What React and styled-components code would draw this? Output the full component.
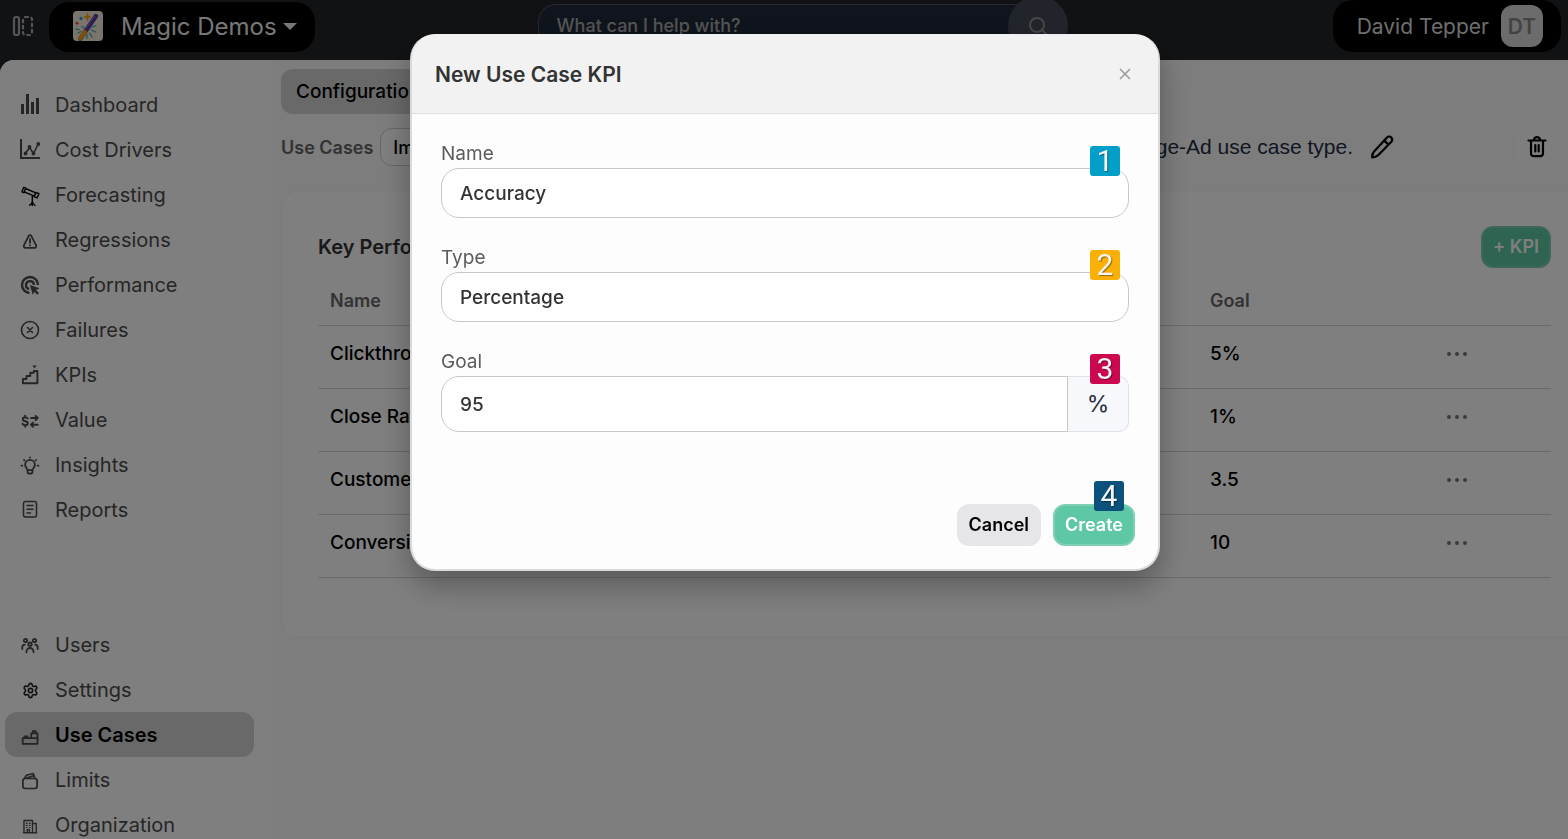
import styled, { createGlobalStyle } from "styled-components";
import { useState } from "react";
import { Settings } from "lucide-react";

const mainNav = [
  { label: "Dashboard", icon: <DashboardIcon /> },
  { label: "Cost Drivers", icon: <CostIcon /> },
  { label: "Forecasting", icon: <TelescopeIcon /> },
  { label: "Regressions", icon: <WarningIcon /> },
  { label: "Performance", icon: <TargetIcon /> },
  { label: "Failures", icon: <FailureIcon /> },
  { label: "KPIs", icon: <StairsIcon /> },
  { label: "Value", icon: <ValueIcon /> },
  { label: "Insights", icon: <BulbIcon /> },
  { label: "Reports", icon: <ReportIcon /> },
];

const adminNav = [
  { label: "Users", icon: <UsersIcon /> },
  { label: "Settings", icon: <Settings size={17} strokeWidth={2.3} color="#222" /> },
  { label: "Use Cases", icon: <BlocksIcon />, active: true },
  { label: "Limits", icon: <WalletIcon /> },
  { label: "Organization", icon: <BuildingIcon /> },
];

const kpis = [
  { name: "Clickthrough", goal: "5%" },
  { name: "Close Rate", goal: "1%" },
  { name: "Customers", goal: "3.5" },
  { name: "Conversion", goal: "10" },
];

function Svg({ size = 24, width = 1.6, children }) {
  return (
    <svg
      width={size}
      height={size}
      viewBox="0 0 24 24"
      fill="none"
      stroke="currentColor"
      strokeWidth={width}
      strokeLinecap="round"
      strokeLinejoin="round"
      aria-hidden="true"
    >
      {children}
    </svg>
  );
}

function DashboardIcon() {
  return (
    <Svg>
      <path d="M3 10h3v10H3zM8 0h3v20H8zM13 8h3v12h-3zM18 4h3v16h-3z" fill="currentColor" stroke="none" />
    </Svg>
  );
}

function CostIcon() {
  return (
    <Svg>
      <path d="M3 0v19h19" strokeWidth="2" strokeLinecap="butt" strokeLinejoin="miter" />
      <path d="M7.500 14.500l4-6 4 6L20 5.500" />
      <g fill="currentColor" stroke="none">
        <circle cx="7.500" cy="14.500" r="1.900" />
        <circle cx="11.500" cy="8" r="1.900" />
        <circle cx="15.500" cy="14.500" r="1.900" />
        <circle cx="20.300" cy="5" r="1.900" />
      </g>
    </Svg>
  );
}

function TelescopeIcon() {
  return (
    <Svg width={1.4}>
      <g stroke="#000">
        <path d="M5.800 3.300l2 .9-1.900 4.500-2-.9zM7.600 4.500l10.200 4.400-1.400 3.200L6.200 7.900M17.900 8.400l3 1.300-1.800 4.200-3-1.300z" />
        <path d="M14.300 12.500v9M14.300 17.500c-.3 1.800-1.300 2.800-2.600 3.800M14.300 17.500c.3 1.800 1.300 2.800 2.600 3.800" />
      </g>
    </Svg>
  );
}

function WarningIcon() {
  return (
    <Svg width={1.8}>
      <path d="M10.700 6.800L5.900 16.400a1.700 1.700 0 0 0 1.500 2.400h9.200a1.700 1.700 0 0 0 1.500-2.400l-4.800-9.600a1.500 1.500 0 0 0-2.600 0z" />
      <path d="M12 10v3.800M12 16.100v.3" />
    </Svg>
  );
}

function TargetIcon() {
  return (
    <Svg width={2.4}>
      <path d="M20 11A8 8 0 1 0 11.500 19M16 10.800a4 4 0 1 0-4.800 4.200" strokeLinecap="butt" />
      <path d="M12 11l9.500 3.200-3.500 1.800 3 3-1.700 1.700-3-3-1.500 3.300z" fill="currentColor" stroke="none" />
    </Svg>
  );
}

function FailureIcon() {
  return (
    <Svg width={1.6}>
      <circle cx="12" cy="11" r="8.500" />
      <path d="M9.500 8.500l5 5M14.500 8.500l-5 5" />
    </Svg>
  );
}

function StairsIcon() {
  return (
    <Svg width={1.9}>
      <path d="M4.900 19.200v-4.200h3.600v-3h3.800V8.800h3.500V7h3.600v12.200z" />
      <path d="M14.300 1.500h4.400l-2.200 2.800z" fill="currentColor" stroke="none" />
    </Svg>
  );
}

function ValueIcon() {
  return (
    <Svg width={1.9}>
      <path d="M9.600 9.500C9 8.600 8.200 8.300 7.200 8.300c-1.400 0-2.400.6-2.400 1.900 0 2.800 5 1.300 5 4 0 1.300-1 2-2.500 2-1.200 0-2.200-.4-2.800-1.400M7.200 6.800v1.500M7.200 16.200v1.500" />
      <path d="M13 9h6.600M17.600 6.900L19.700 9l-2.100 2.100M19.700 15.700H13M15 13.600l-2.100 2.100 2.100 2.100" />
    </Svg>
  );
}

function BulbIcon() {
  return (
    <Svg width={1.8}>
      <path d="M9.500 16c0-1.500-2.400-2.400-2.400-5.200a4.900 4.900 0 0 1 9.800 0c0 2.800-2.400 3.700-2.400 5.200v1.700c0 1.200-.8 2-2.500 2s-2.500-.8-2.500-2zM9.700 16.200h4.600" />
      <path d="M12 3.300v.3M3.500 11.700h.8M19.700 11.700h.8M6 5.900l.4.400M18 5.900l-.4.400" />
    </Svg>
  );
}

function ReportIcon() {
  return (
    <Svg width={1.5}>
      <rect x="5.500" y="2.500" width="13" height="15.500" rx="2" />
      <path d="M9 6.500h6M9 10.200h6M9 14h3.500" />
    </Svg>
  );
}

function UsersIcon() {
  return (
    <Svg width={1.8}>
      <circle cx="7.500" cy="6.500" r="1.700" />
      <circle cx="16.500" cy="6.500" r="1.700" />
      <circle cx="12" cy="10.200" r="1.700" />
      <path d="M8.500 18.300v-.8a3.500 3.500 0 0 1 7 0v.8M4.300 15v-1.800c0-1.500 1-2.500 2.500-2.600M19.700 15v-1.800c0-1.500-1-2.500-2.500-2.600" />
    </Svg>
  );
}

function BlocksIcon() {
  return (
    <Svg width={1.8}>
      <path d="M4.700 19.800v-5.600h8.500V9.300h6.300v10.500zM13.200 14.200h6.300M6.500 14v-1.700h3V14M14.800 9V7.200h3V9" />
    </Svg>
  );
}

function WalletIcon() {
  return (
    <Svg width={1.7}>
      <rect x="4.900" y="9.500" width="14.200" height="10" rx="2.400" />
      <path d="M6.600 9.200l1.800-3 6.800-1.700 1.600 4.500M9.500 8.800l5.800-2" />
    </Svg>
  );
}

function BuildingIcon() {
  return (
    <Svg width={1.4}>
      <path d="M6 18.500V6.500h8.500v12M14.500 9.500h3.700v9M5.500 18.700h13.200M9.200 18.500v-2.700h2.200v2.700" />
      <path d="M8.500 9.200h.6M11.600 9.200h.6M8.500 11.400h.6M11.600 11.400h.6M8.500 13.600h.6M11.600 13.600h.6" />
    </Svg>
  );
}

function PanelIcon() {
  return (
    <Svg size={24} width={2.2}>
      <rect x="3" y="3" width="5" height="18" rx="2" />
      <rect x="12" y="3" width="9" height="18" rx="2.500" strokeDasharray="2.500 3.600" />
    </Svg>
  );
}

function WandLogo() {
  return (
    <svg width="30" height="30" viewBox="0 0 30 30" aria-hidden="true">
      <rect width="30" height="30" rx="4" fill="#f3ead8" />
      <path d="M7.500 27.500L22.800 5.200" stroke="#5c3a9e" strokeWidth="4.600" strokeLinecap="round" />
      <path d="M21 5.500l-8 12" stroke="#8a63c8" strokeWidth="1.200" strokeLinecap="round" />
      <path d="M7.500 27L11.500 21.200" stroke="#f0a020" strokeWidth="4.600" strokeLinecap="round" />
      <path d="M14.500 1l1.200 3.800L19 6l-3.300 1.200L14.500 11l-1.200-3.800L10 6l3.300-1.200z" fill="#f2a516" />
      <path d="M8 5l.7 1.800 1.800.7-1.800.7L8 10l-.7-1.800-1.800-.7 1.800-.7z" fill="#2f7fd0" />
      <path d="M4 10l.7 1.600 1.600.7-1.600.7L4 14.600l-.7-1.600-1.600-.7 1.600-.7z" fill="#e0453a" />
      <path d="M3 18l3 .7M5 22l3-1.500M9 15.500l2 1.500M19 16l4-1.500M18.500 19l4 2M16.500 22l2.500 4M14 23.500v4" stroke="#2fa79c" strokeWidth="1.200" strokeLinecap="round" />
    </svg>
  );
}

function PencilIcon() {
  return (
    <Svg size={26} width={2.1}>
      <path d="M16.600 3.200a2.800 2.800 0 0 1 4 4L8.200 19.800c-1.300 1.200-3 1.800-5.200 1.700-.2-2.200.4-4 1.700-5.300zM14 5.900l3.900 3.900" />
    </Svg>
  );
}

function TrashIcon() {
  return (
    <Svg width={2.2}>
      <path d="M3.500 5.500h17M6 5.500v12.700a3 3 0 0 0 3 3h6a3 3 0 0 0 3-3V5.500M8.800 5.300a3.200 3.200 0 0 1 6.400 0M10.300 10v6.500M13.700 10v6.500" />
    </Svg>
  );
}

function App() {
  const [name, setName] = useState("Accuracy");
  const [type, setType] = useState("Percentage");
  const [goal, setGoal] = useState("95");

  return (
    <>
      <GlobalStyle />
      <Page>
        <TopBar>
          <PanelButton aria-label="Toggle sidebar">
            <PanelIcon />
          </PanelButton>
          <TeamButton>
            <WandLogo />
            <span>Magic Demos</span>
            <Caret />
          </TeamButton>
          <Search>
            <input aria-label="Search" placeholder="What can I help with?" />
            <SearchButton aria-label="Submit search">
              <Svg size={24} width={2}>
                <circle cx="11" cy="11" r="7" />
                <path d="M16 16l5 5" />
              </Svg>
            </SearchButton>
          </Search>
          <UserButton>
            <span>David Tepper</span>
            <Initials>DT</Initials>
          </UserButton>
        </TopBar>
        <Body>
          <Sidebar>
            <NavList>
              {mainNav.map((item) => (
                <NavItem key={item.label} href="#">
                  <IconBox>{item.icon}</IconBox>
                  {item.label}
                </NavItem>
              ))}
            </NavList>
            <NavList>
              {adminNav.map((item) => (
                <NavItem key={item.label} href="#" $active={item.active}>
                  <IconBox>{item.icon}</IconBox>
                  {item.label}
                </NavItem>
              ))}
            </NavList>
          </Sidebar>
          <Content>
            <Tab>Configuration</Tab>
            <Toolbar>
              <label htmlFor="usecase">Use Cases</label>
              <UseCaseSelect id="usecase" defaultValue="Image-Ad">
                <option>Image-Ad</option>
              </UseCaseSelect>
              <Description>Image-Ad use case type.</Description>
              <IconButton aria-label="Edit">
                <PencilIcon />
              </IconButton>
              <DeleteButton aria-label="Delete">
                <TrashIcon />
              </DeleteButton>
            </Toolbar>
            <Card>
              <CardHead>
                <h2>Key Performance</h2>
                <PrimaryButton>+ KPI</PrimaryButton>
              </CardHead>
              <Table>
                <thead>
                  <tr>
                    <th>Name</th>
                    <th>Goal</th>
                    <th aria-label="Actions" />
                  </tr>
                </thead>
                <tbody>
                  {kpis.map((kpi) => (
                    <tr key={kpi.name}>
                      <td>{kpi.name}</td>
                      <td>{kpi.goal}</td>
                      <td>
                        <MoreButton aria-label="More">
                          <svg width="24" height="6" viewBox="0 0 24 6" fill="currentColor">
                            <circle cx="4" cy="4" r="2" />
                            <circle cx="12" cy="4" r="2" />
                            <circle cx="20" cy="4" r="2" />
                          </svg>
                        </MoreButton>
                      </td>
                    </tr>
                  ))}
                </tbody>
              </Table>
            </Card>
          </Content>
        </Body>
      </Page>

      <Overlay>
        <Modal role="dialog" aria-labelledby="modal-title">
          <ModalHead>
            <h1 id="modal-title">New Use Case KPI</h1>
            <CloseButton aria-label="Close">
              <svg width="12" height="12" viewBox="0 0 12 12" stroke="currentColor" strokeWidth="1.500">
                <path d="M1 1l10 10M11 1L1 11" />
              </svg>
            </CloseButton>
          </ModalHead>
          <Form onSubmit={(e) => e.preventDefault()}>
            <Field>
              <label htmlFor="name">Name</label>
              <Input id="name" value={name} onChange={(e) => setName(e.target.value)} />
              <Step $color="#029fc9">1</Step>
            </Field>
            <Field>
              <label htmlFor="type">Type</label>
              <Input as="select" id="type" value={type} onChange={(e) => setType(e.target.value)}>
                <option>Percentage</option>
                <option>Number</option>
              </Input>
              <Step $color="#fab005">2</Step>
            </Field>
            <Field>
              <label htmlFor="goal">Goal</label>
              <InputGroup>
                <Input id="goal" value={goal} onChange={(e) => setGoal(e.target.value)} />
                <Addon>%</Addon>
              </InputGroup>
              <Step $color="#cb0850">3</Step>
            </Field>
            <Actions>
              <CancelButton type="button">Cancel</CancelButton>
              <PrimaryButton type="submit">Create</PrimaryButton>
              <Step $color="#0c507c">4</Step>
            </Actions>
          </Form>
        </Modal>
      </Overlay>
    </>
  );
}

const GlobalStyle = createGlobalStyle`
  * {
    box-sizing: border-box;
  }
  body {
    margin: 0;
    overflow: hidden;
    font-family: Inter, "Liberation Sans", sans-serif;
    font-size: 19px;
    color: #000;
    background: #222528;
  }
  h1, h2, p {
    margin: 0;
  }
  button, input, select {
    font: inherit;
    color: inherit;
  }
  button {
    border: 0;
    padding: 0;
    background: none;
    cursor: pointer;
  }
`;

const Page = styled.div`
  display: flex;
  flex-direction: column;
  height: 100vh;
`;

const TopBar = styled.header`
  display: flex;
  align-items: flex-start;
  flex: none;
  height: 60px;
  padding-right: 7px;
  color: #fff;
`;

const PanelButton = styled.button`
  display: flex;
  margin: 14px 14px 0 11px;
  color: #aaa;
`;

const TeamButton = styled.button`
  display: flex;
  align-items: center;
  height: 50px;
  margin-top: 2px;
  padding: 0 18px 2px 24px;
  border-radius: 20px;
  background: #000;
  font-size: 24px;
  color: #eee;

  span {
    margin: 0 6px 0 18px;
  }
`;

const Caret = styled.i`
  border: 7px solid transparent;
  border-top-color: #eee;
  border-bottom: 0;
`;

const Search = styled.div`
  display: flex;
  flex: none;
  width: 34%;
  margin: -4px 0 0 223px;
  align-items: center;

  input {
    flex: 1;
    height: 44px;
    padding: 0 18px 2px;
    border: 1px solid #4a505a;
    border-right: 0;
    border-radius: 18px 0 0 18px;
    background: #202a3a;
    font-size: 18px;
    font-weight: 500;
  }
  input::placeholder {
    color: #aaa;
    opacity: 1;
  }
`;

const SearchButton = styled.button`
  display: grid;
  place-items: center;
  width: 60px;
  height: 60px;
  margin-left: -32px;
  border-radius: 50%;
  background: #444958;
  color: #8e8e8e;
`;

const UserButton = styled.button`
  display: flex;
  align-items: center;
  gap: 12px;
  height: 52px;
  margin-left: auto;
  padding: 0 18px 0 24px;
  border-radius: 20px;
  background: #000;
  font-size: 21px;
  color: #ddd;
`;

const Initials = styled.b`
  display: grid;
  place-items: center;
  width: 42px;
  height: 42px;
  border-radius: 12px;
  background: #d8d8d8;
  color: #888;
  font-weight: 600;
`;

const Body = styled.div`
  display: grid;
  grid-template-columns: 272px 1fr;
  flex: 1;
  min-height: 0;
  border-radius: 14px 0 0 0;
  background: #fafafa;
  overflow: hidden;
`;

const Sidebar = styled.nav`
  display: flex;
  flex-direction: column;
  gap: 90px;
  padding: 22px 18px 0 5px;
  background: #fff;
`;

const NavList = styled.div`
  display: flex;
  flex-direction: column;
`;

const NavItem = styled.a`
  display: flex;
  align-items: center;
  gap: 13px;
  flex: none;
  height: 45px;
  padding-left: 13px;
  border-radius: 12px;
  background: ${({ $active }) => ($active ? "#d2d2d2" : "none")};
  color: ${({ $active }) => ($active ? "#000" : "#4c4c4c")};
  font-size: 20px;
  font-weight: ${({ $active }) => ($active ? 600 : 400)};
  text-decoration: none;
`;

const IconBox = styled.span`
  display: grid;
  place-items: center;
  width: 24px;
  height: 24px;
  margin-top: 2px;
  color: #4a4a4a;
`;

const Content = styled.main`
  padding: 9px 0 0 9px;
`;

const Tab = styled.button`
  height: 45px;
  padding: 0 15px;
  border-radius: 12px;
  background: #d2d2d2;
  font-weight: 500;
`;

const Toolbar = styled.div`
  display: flex;
  align-items: center;
  height: 42px;
  margin: 12px 10px 0 0;

  label {
    margin-right: 7px;
    font-size: 18px;
    font-weight: 600;
    color: #666;
  }
`;

const UseCaseSelect = styled.select`
  appearance: none;
  width: 300px;
  height: 38px;
  padding: 0 12px;
  border: 1px solid #ccc;
  border-radius: 12px;
  background: #fff;
  font-size: 18px;
  font-weight: 500;
`;

const Description = styled.p`
  margin-left: auto;
  font-family: "Liberation Sans", sans-serif;
  font-size: 21px;
  color: #212e44;
`;

const IconButton = styled.button`
  display: grid;
  place-items: center;
  width: 42px;
  height: 42px;
  margin: 0 113px 0 8px;
`;

const DeleteButton = styled(IconButton)`
  margin: 0;
  border-radius: 12px;
  background: #fcfcfc;
`;

const Card = styled.section`
  margin-top: 22px;
  padding: 35px 17px 59px 36px;
  border: 1px solid #f4f4f4;
  border-right: 0;
  border-radius: 18px 0 0 18px;
  background: #fff;
`;

const CardHead = styled.div`
  display: flex;
  align-items: center;
  justify-content: space-between;

  h2 {
    font-size: 20px;
    font-weight: 600;
    color: #333;
  }
`;

const PrimaryButton = styled.button`
  height: 42px;
  padding: 0 10px 2px;
  border: 2px solid #7fcfb2;
  border-radius: 12px;
  background: #5ec7a5;
  font-size: 18px;
  font-weight: 600;
  color: #fff;
`;

const Table = styled.table`
  width: 100%;
  margin-top: 7px;
  border-collapse: collapse;
  table-layout: fixed;

  th, td {
    height: 63px;
    padding: 0 12px 7px;
    border-bottom: 1px solid #d6d6d6;
    text-align: left;
    font-weight: 500;
  }
  th {
    height: 50px;
    padding: 2px 12px 0;
    font-size: 18px;
    font-weight: 600;
    color: #666;
  }
  th:nth-child(2) {
    width: 235px;
  }
  th:nth-child(3) {
    width: 118px;
  }
`;

const MoreButton = styled.button`
  display: flex;
  color: #777;
`;

const Overlay = styled.div`
  position: fixed;
  inset: 0;
  display: flex;
  align-items: flex-start;
  justify-content: center;
  padding-top: 34px;
  background: rgba(0, 0, 0, 0.5);
`;

const Modal = styled.div`
  width: 750px;
  max-width: 100%;
  margin-left: 2px;
  border: 2px solid #dadada;
  border-top: 1px solid #eee;
  border-radius: 25px;
  background: #fdfdfd;
  box-shadow: 0 14px 30px rgba(0, 0, 0, 0.3);
`;

const ModalHead = styled.div`
  display: flex;
  align-items: center;
  justify-content: space-between;
  height: 79px;
  padding: 0 27px 0 23px;
  border-bottom: 1px solid #dedede;
  border-radius: 23px 23px 0 0;
  background: #f2f2f2;

  h1 {
    font-size: 21px;
    font-weight: 600;
    color: #333;
  }
`;

const CloseButton = styled.button`
  display: flex;
  color: #999;
`;

const Form = styled.form`
  padding: 28px 23px 23px 29px;
`;

const Field = styled.div`
  position: relative;
  margin: 0 6px 28px 0;

  label {
    display: block;
    line-height: 24px;
    padding-bottom: 2px;
    color: #5c5c5c;
  }
`;

const Input = styled.input`
  appearance: none;
  display: block;
  width: 100%;
  height: 50px;
  padding: 0 18px;
  border: 1px solid #c8c8c8;
  border-radius: 18px;
  background: #fff;
  color: #333;
  font-weight: 500;
`;

const InputGroup = styled.div`
  display: flex;

  ${Input} {
    height: 56px;
    border-radius: 18px 0 0 18px;
  }
`;

const Addon = styled.span`
  display: grid;
  place-items: center;
  flex: none;
  width: 61px;
  border: 1px solid #dde1e8;
  border-left: 0;
  border-radius: 0 10px 10px 0;
  background: #f7f8fb;
  font-size: 23px;
  color: #28303f;
`;

const Step = styled.span`
  position: absolute;
  top: 4px;
  right: 9px;
  display: grid;
  place-items: center;
  width: 30px;
  height: 30px;
  border-radius: 3px;
  background: ${({ $color }) => $color};
  font-family: Roboto, sans-serif;
  font-size: 30px;
  font-weight: 400;
  line-height: 30px;
  color: #f5f5f5;
  text-shadow: 1px 1px 1px rgba(0, 0, 0, 0.4);
`;

const Actions = styled.div`
  position: relative;
  display: flex;
  justify-content: flex-end;
  gap: 12px;
  padding-top: 44px;

  ${Step} {
    top: 21px;
    right: 11px;
  }
`;

const CancelButton = styled(PrimaryButton)`
  border-color: #e6e6e8;
  background: #e6e6e8;
  color: #000;
`;

export default App;
